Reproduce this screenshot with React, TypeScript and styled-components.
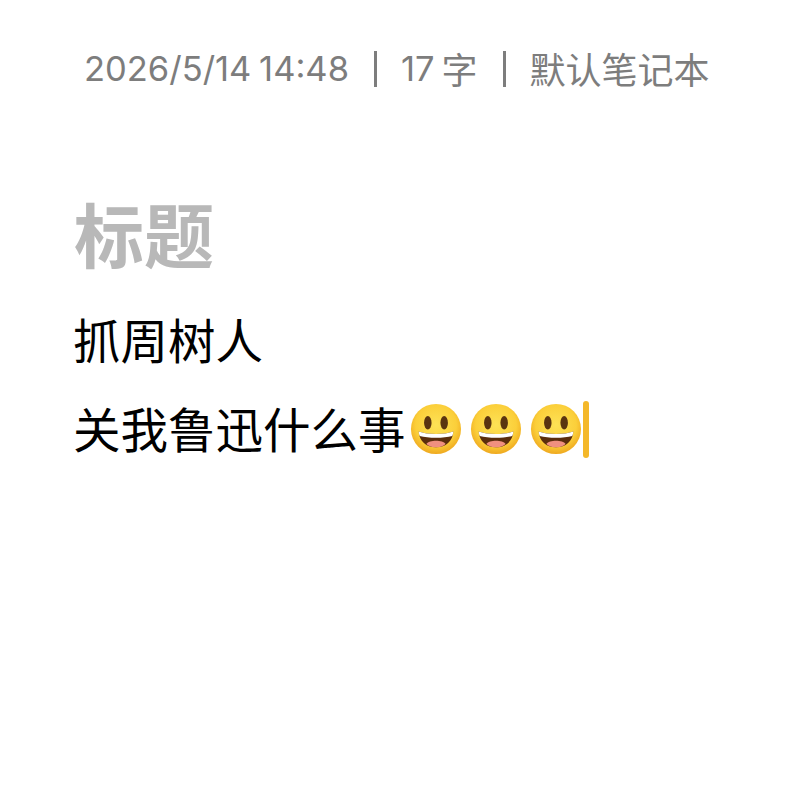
import React from "react";
import styled, { createGlobalStyle } from "styled-components";

const Global = createGlobalStyle`
  html, body { margin: 0; padding: 0; background: #fff; }
`;

const Page = styled.div`
  width: 788px;
  height: 796px;
  box-sizing: border-box;
  background: #fff;
  padding: 43px 0 0 74px;
  font-family: "Noto Sans CJK SC", sans-serif;
  overflow: hidden;
`;

const Meta = styled.div`
  display: flex;
  align-items: center;
  height: 50px;
  margin-left: 10px;
  color: #7d7d7d;
  font-size: 34.5px;
  word-spacing: -2px;
  font-family: Inter, "Noto Sans CJK SC", sans-serif;
  white-space: nowrap;
`;

const MetaCjk = styled.span<{ $space?: number }>`
  font-size: 36px;
  font-family: "Noto Sans CJK SC", sans-serif;
  margin-left: ${(p) => p.$space ?? 0}px;
`;

const Divider = styled.span`
  width: 3px;
  height: 36px;
  background: #7d7d7d;
  margin: 2px 24px 0 25px;
`;

const Title = styled.h1`
  margin: 97px 0 0;
  height: 86px;
  line-height: 86px;
  font-size: 70px;
  font-weight: 700;
  color: #b8b8b8;
`;

const Line = styled.div<{ $gap: number }>`
  display: flex;
  align-items: center;
  height: 70px;
  margin-top: ${(p) => p.$gap}px;
  margin-left: -1px;
  font-size: 47.5px;
  color: #000;
  white-space: nowrap;
`;

const EmojiGlyph = styled.svg`
  width: 52px;
  height: 52px;
  margin: 4px 4px 0;
  flex: none;
`;

const Caret = styled.span`
  width: 6px;
  height: 57px;
  border-radius: 3px;
  background: #f4b82a;
  margin: 4px 0 0 -3px;
`;

function Smile() {
  return (
    <EmojiGlyph viewBox="0 0 54 54">
      <defs>
        <radialGradient id="face" cx="50%" cy="42%" r="58%">
          <stop offset="0%" stopColor="#fde256" />
          <stop offset="70%" stopColor="#fbcf3a" />
          <stop offset="100%" stopColor="#efa91f" />
        </radialGradient>
      </defs>
      <circle cx="27" cy="27" r="26" fill="url(#face)" />
      <ellipse cx="18.5" cy="20.5" rx="3.9" ry="7" fill="#5a3410" />
      <ellipse cx="35.5" cy="20.5" rx="3.9" ry="7" fill="#5a3410" />
      <path d="M9 29.5 C18 33 36 33 45 29.5 C44.5 39.5 37 46 27 46 C17 46 9.5 39.5 9 29.5Z" fill="#5a2d0c" />
      <path d="M9 29.5 C18 33 36 33 45 29.5 C44.9 31.5 44.5 33 43.9 34.2 C35 36.6 19 36.6 10.1 34.2 C9.5 33 9.1 31.5 9 29.5Z" fill="#fff" />
      <path d="M17 42.5 C20 38 34 38 37 42.5 C34.5 45 31 46 27 46 C23 46 19.5 45 17 42.5Z" fill="#f0907f" />
    </EmojiGlyph>
  );
}

export default function App() {
  return (
    <Page>
      <Global />
      <Meta>
        2026/5/14 14:48
        <Divider />
        17
        <MetaCjk $space={7}>字</MetaCjk>
        <Divider />
        <MetaCjk>默认笔记本</MetaCjk>
      </Meta>
      <Title>标题</Title>
      <Line $gap={27}>抓周树人</Line>
      <Line $gap={19}>
        关我鲁迅什么事
        <Smile />
        <Smile />
        <Smile />
        <Caret />
      </Line>
    </Page>
  );
}
